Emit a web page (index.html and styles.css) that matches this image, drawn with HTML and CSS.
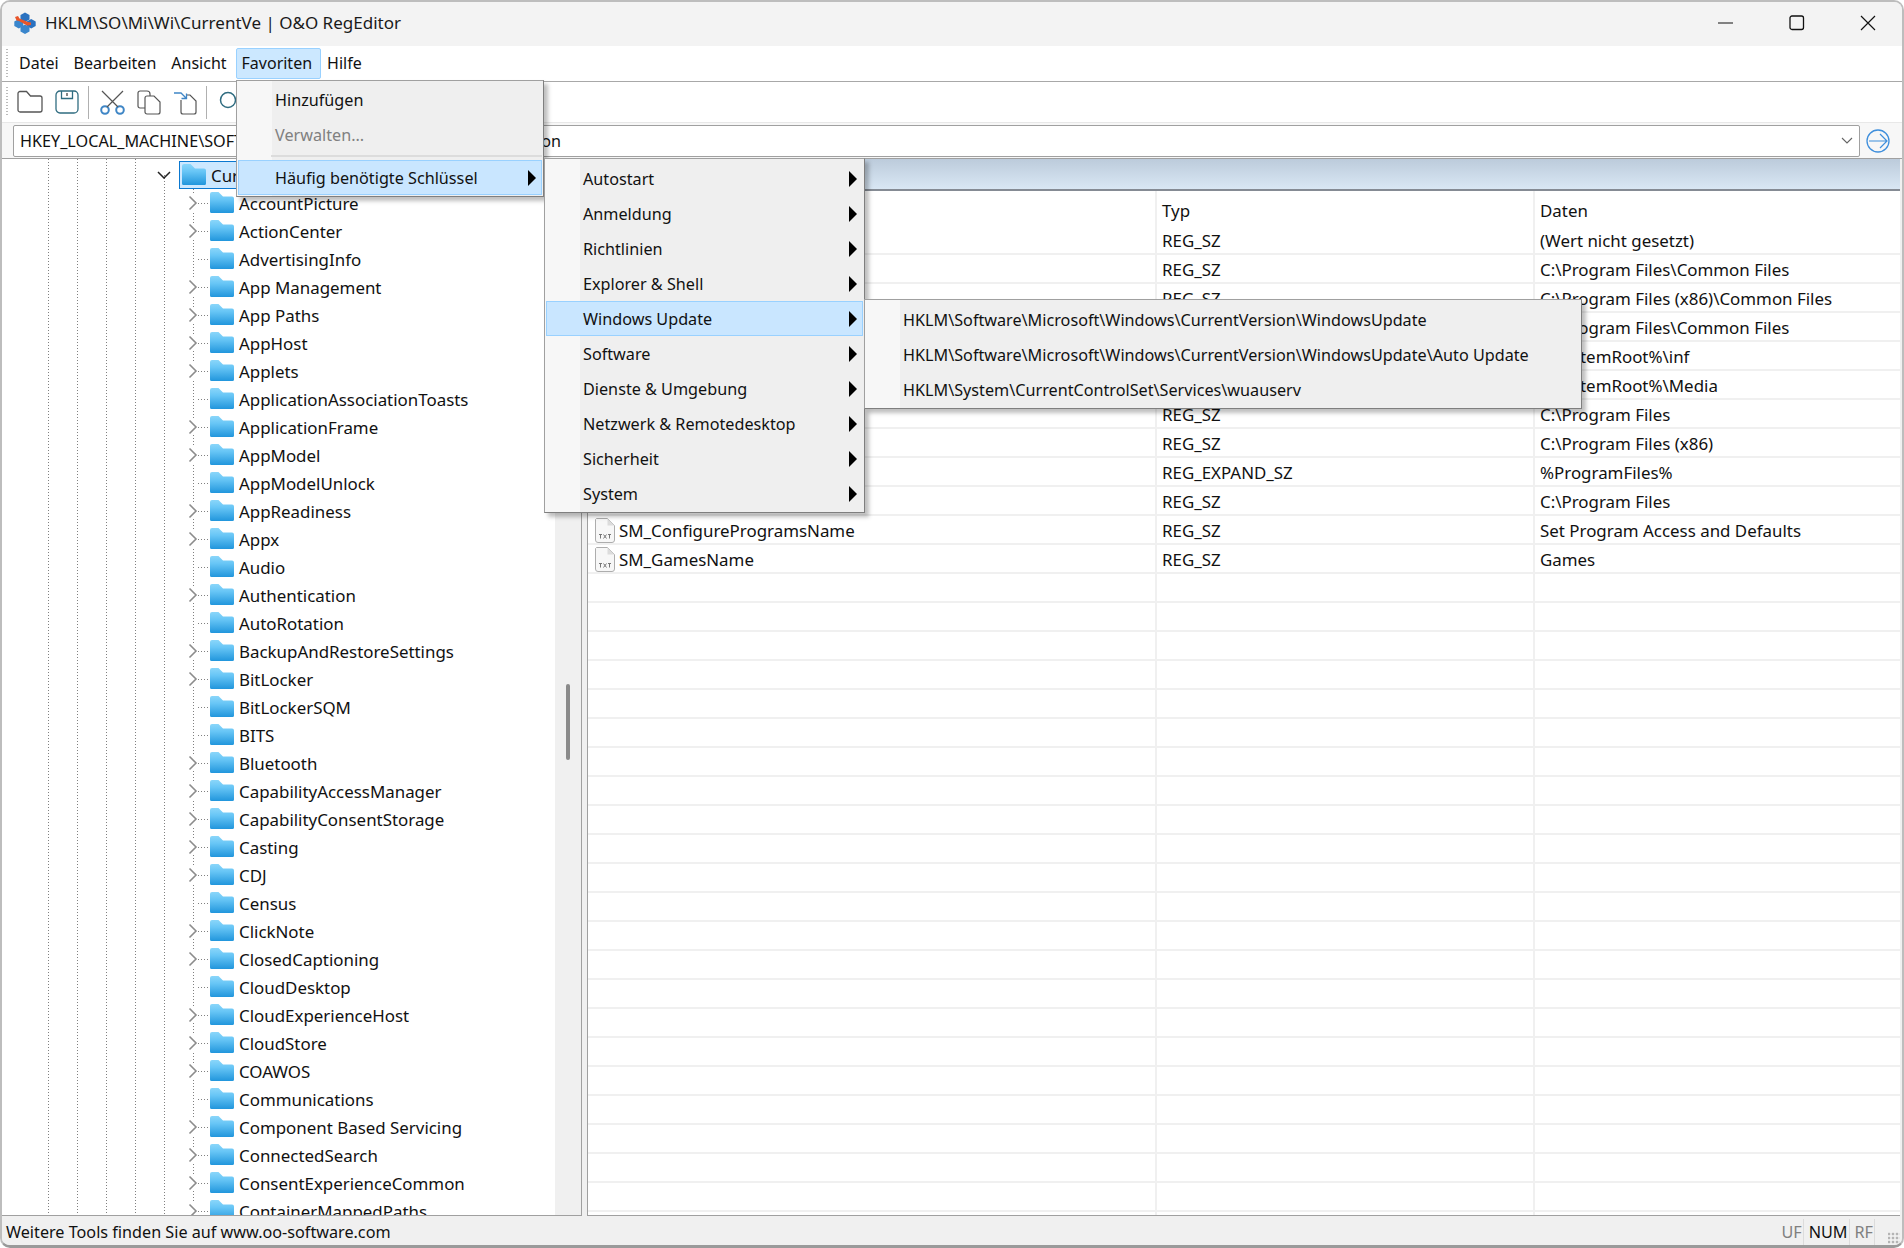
FILE: index.html
```html
<!DOCTYPE html>
<html lang="de">
<head>
    <meta charset="UTF-8">
    <title>O&amp;O RegEditor</title>
    <link rel="stylesheet" href="styles.css">
</head>
<body>
    <svg class="defs" width="0" height="0">
        <symbol id="folder" viewBox="0 0 24 21">
            <path d="M0 2a2 2 0 0 1 2-2h6.500l4.500 4.500h9a2 2 0 0 1 2 2V19.500a1.500 1.500 0 0 1-1.500 1.500H1.500A1.500 1.500 0 0 1 0 19.500z" fill="url(#folderfill)"/>
        </symbol>
        <linearGradient id="folderfill" x1="0" y1="0" x2="0" y2="1">
            <stop offset="0" stop-color="#8ad6fa"/>
            <stop offset="0.35" stop-color="#68c6f6"/>
            <stop offset="1" stop-color="#2196dc"/>
        </linearGradient>
        <symbol id="chev" viewBox="0 0 10 16">
            <path d="M1.500 1.500 8 8l-6.500 6.500" fill="none" stroke="#8c8c8c" stroke-width="1.600"/>
        </symbol>
        <symbol id="arrow" viewBox="0 0 8 16">
            <path d="M0 0l8 8-8 8z" fill="#000"/>
        </symbol>
        <symbol id="txt" viewBox="0 0 20 25">
            <path d="M1.500.5h11l7 7v14.500a2.500 2.500 0 0 1-2.500 2.500H3a2.500 2.500 0 0 1-2.500-2.500V1.500z" fill="#f7f7f7" stroke="#adadad"/>
            <path d="M12.500.5v7h7z" fill="#dcdcdc"/>
            <path d="M4 16.500h3M5.500 16.500v4M8.500 16.500l3 4M11.500 16.500l-3 4M13 16.500h3M14.500 16.500v4" stroke="#777" fill="none"/>
        </symbol>
    </svg>

    <div class="window">
        <div class="titlebar">
            <svg class="logo" width="22" height="22" viewBox="0 0 22 22">
                <path d="M11 .5l4.500 2.500v4.500L11 10 6.500 7.500V3z" fill="#2b72c0"/>
                <path d="M4.800 7L9.300 9.500V14L4.800 16.500.3 14V9.500z" fill="#3a86cc"/>
                <path d="M17.200 7l4.500 2.500V14l-4.500 2.500L12.700 14V9.500z" fill="#2b72c0"/>
                <path d="M11 12.500l4.500 2.500v4.500L11 22l-4.500-2.500V15z" fill="#3a86cc"/>
                <path d="M1 5l3-1 1.500 2.500L14 10l3 .5v2.500l-4 .5L5 9 2.500 8.500z" fill="#e8562a"/>
            </svg>
            <span class="title">HKLM\SO\Mi\Wi\CurrentVe | O&amp;O RegEditor</span>
            <div class="winbtns">
                <svg width="16" height="16" viewBox="0 0 16 16"><path d="M0 8h15" stroke="#111" stroke-width="1.200"/></svg>
                <svg width="16" height="16" viewBox="0 0 16 16"><rect x="1" y="1" width="13.500" height="13.500" rx="2" fill="none" stroke="#111" stroke-width="1.300"/></svg>
                <svg width="16" height="16" viewBox="0 0 16 16"><path d="M1 1l14 14M15 1L1 15" stroke="#111" stroke-width="1.200"/></svg>
            </div>
        </div>

        <div class="menubar">
            <span class="gripper"></span>
            <span class="mb-item">Datei</span>
            <span class="mb-item">Bearbeiten</span>
            <span class="mb-item">Ansicht</span>
            <span class="mb-item active">Favoriten</span>
            <span class="mb-item">Hilfe</span>
        </div>

        <div class="toolbar">
            <span class="gripper"></span>
            <svg class="tool tool-first" width="26" height="24" viewBox="0 0 26 24"><path d="M1 3.500a2 2 0 0 1 2-2h6.500l4 4.500H23a2 2 0 0 1 2 2v12a2 2 0 0 1-2 2H3a2 2 0 0 1-2-2z" fill="none" stroke="#555" stroke-width="1.300"/></svg>
            <svg class="tool" width="24" height="24" viewBox="0 0 24 24"><rect x="1" y="1" width="22" height="22" rx="4" fill="none" stroke="#2f6c80" stroke-width="1.300"/><path d="M6.500 1v7.500h11V1" fill="none" stroke="#2f6c80" stroke-width="1.300"/><path d="M12 3v3" stroke="#444" stroke-width="1.300"/></svg>
            <span class="tool-sep"></span>
            <svg class="tool" width="25" height="25" viewBox="0 0 25 25"><circle cx="5" cy="20" r="3.800" fill="none" stroke="#3f86c6" stroke-width="2"/><circle cx="20" cy="20" r="3.800" fill="none" stroke="#3f86c6" stroke-width="2"/><path d="M2 1l16 16M23 1L7 17" stroke="#555" stroke-width="1.200"/></svg>
            <svg class="tool" width="24" height="25" viewBox="0 0 24 25"><path d="M8 18H3a2 2 0 0 1-2-2V3a2 2 0 0 1 2-2h7a3 3 0 0 1 3 3v2" fill="none" stroke="#555" stroke-width="1.200"/><path d="M8 8a2 2 0 0 1 2-2h7l6 6v10a2 2 0 0 1-2 2H10a2 2 0 0 1-2-2z" fill="none" stroke="#555" stroke-width="1.200"/></svg>
            <svg class="tool" width="24" height="25" viewBox="0 0 24 25"><path d="M8 10v12a2 2 0 0 0 2 2h11a2 2 0 0 0 2-2V11l-6-6h-3" fill="none" stroke="#555" stroke-width="1.200"/><path d="M1 3h7l5.500 5.500M13.500 3.500v5h-5" fill="none" stroke="#3f86c6" stroke-width="1.300"/></svg>
            <span class="tool-sep"></span>
            <svg class="tool" width="24" height="24" viewBox="0 0 24 24"><circle cx="10" cy="10" r="7.500" fill="none" stroke="#2f6c80" stroke-width="1.500"/></svg>
        </div>

        <div class="addressbar">
            <div class="combo">
                <span class="combo-text">HKEY_LOCAL_MACHINE\SOFTWARE\Microsoft\Windows\CurrentVersion</span>
                <svg width="12" height="8" viewBox="0 0 12 8"><path d="M1 1l5 5 5-5" fill="none" stroke="#666" stroke-width="1.100"/></svg>
            </div>
            <svg class="go" width="24" height="24" viewBox="0 0 24 24"><circle cx="12" cy="12" r="11" fill="none" stroke="#3f8fdc" stroke-width="1.300"/><path d="M3 12h18M14 5l7 7-7 7" fill="none" stroke="#3f8fdc" stroke-width="1.200"/></svg>
        </div>

        <div class="panes">
            <div class="tree-pane">
                <div class="tree">
                    <div class="node node-cur">
                        <svg class="chev-open" width="14" height="8" viewBox="0 0 14 8"><path d="M1 1l6 6 6-6" fill="none" stroke="#222" stroke-width="1.500"/></svg>
                        <span class="cur-box"><svg class="folder" width="24" height="21"><use href="#folder"/></svg><span class="cur-label">CurrentVersion</span></span>
                    </div>
                    <div class="subtree">
                        <div class="node"><span class="tw"><svg width="10" height="16"><use href="#chev"/></svg></span><span class="dots"></span><svg class="folder" width="24" height="21"><use href="#folder"/></svg><span class="label">AccountPicture</span></div>
                        <div class="node"><span class="tw"><svg width="10" height="16"><use href="#chev"/></svg></span><span class="dots"></span><svg class="folder" width="24" height="21"><use href="#folder"/></svg><span class="label">ActionCenter</span></div>
                        <div class="node"><span class="tw none"></span><span class="dots"></span><svg class="folder" width="24" height="21"><use href="#folder"/></svg><span class="label">AdvertisingInfo</span></div>
                        <div class="node"><span class="tw"><svg width="10" height="16"><use href="#chev"/></svg></span><span class="dots"></span><svg class="folder" width="24" height="21"><use href="#folder"/></svg><span class="label">App Management</span></div>
                        <div class="node"><span class="tw"><svg width="10" height="16"><use href="#chev"/></svg></span><span class="dots"></span><svg class="folder" width="24" height="21"><use href="#folder"/></svg><span class="label">App Paths</span></div>
                        <div class="node"><span class="tw"><svg width="10" height="16"><use href="#chev"/></svg></span><span class="dots"></span><svg class="folder" width="24" height="21"><use href="#folder"/></svg><span class="label">AppHost</span></div>
                        <div class="node"><span class="tw"><svg width="10" height="16"><use href="#chev"/></svg></span><span class="dots"></span><svg class="folder" width="24" height="21"><use href="#folder"/></svg><span class="label">Applets</span></div>
                        <div class="node"><span class="tw none"></span><span class="dots"></span><svg class="folder" width="24" height="21"><use href="#folder"/></svg><span class="label">ApplicationAssociationToasts</span></div>
                        <div class="node"><span class="tw"><svg width="10" height="16"><use href="#chev"/></svg></span><span class="dots"></span><svg class="folder" width="24" height="21"><use href="#folder"/></svg><span class="label">ApplicationFrame</span></div>
                        <div class="node"><span class="tw"><svg width="10" height="16"><use href="#chev"/></svg></span><span class="dots"></span><svg class="folder" width="24" height="21"><use href="#folder"/></svg><span class="label">AppModel</span></div>
                        <div class="node"><span class="tw none"></span><span class="dots"></span><svg class="folder" width="24" height="21"><use href="#folder"/></svg><span class="label">AppModelUnlock</span></div>
                        <div class="node"><span class="tw"><svg width="10" height="16"><use href="#chev"/></svg></span><span class="dots"></span><svg class="folder" width="24" height="21"><use href="#folder"/></svg><span class="label">AppReadiness</span></div>
                        <div class="node"><span class="tw"><svg width="10" height="16"><use href="#chev"/></svg></span><span class="dots"></span><svg class="folder" width="24" height="21"><use href="#folder"/></svg><span class="label">Appx</span></div>
                        <div class="node"><span class="tw none"></span><span class="dots"></span><svg class="folder" width="24" height="21"><use href="#folder"/></svg><span class="label">Audio</span></div>
                        <div class="node"><span class="tw"><svg width="10" height="16"><use href="#chev"/></svg></span><span class="dots"></span><svg class="folder" width="24" height="21"><use href="#folder"/></svg><span class="label">Authentication</span></div>
                        <div class="node"><span class="tw none"></span><span class="dots"></span><svg class="folder" width="24" height="21"><use href="#folder"/></svg><span class="label">AutoRotation</span></div>
                        <div class="node"><span class="tw"><svg width="10" height="16"><use href="#chev"/></svg></span><span class="dots"></span><svg class="folder" width="24" height="21"><use href="#folder"/></svg><span class="label">BackupAndRestoreSettings</span></div>
                        <div class="node"><span class="tw"><svg width="10" height="16"><use href="#chev"/></svg></span><span class="dots"></span><svg class="folder" width="24" height="21"><use href="#folder"/></svg><span class="label">BitLocker</span></div>
                        <div class="node"><span class="tw none"></span><span class="dots"></span><svg class="folder" width="24" height="21"><use href="#folder"/></svg><span class="label">BitLockerSQM</span></div>
                        <div class="node"><span class="tw none"></span><span class="dots"></span><svg class="folder" width="24" height="21"><use href="#folder"/></svg><span class="label">BITS</span></div>
                        <div class="node"><span class="tw"><svg width="10" height="16"><use href="#chev"/></svg></span><span class="dots"></span><svg class="folder" width="24" height="21"><use href="#folder"/></svg><span class="label">Bluetooth</span></div>
                        <div class="node"><span class="tw"><svg width="10" height="16"><use href="#chev"/></svg></span><span class="dots"></span><svg class="folder" width="24" height="21"><use href="#folder"/></svg><span class="label">CapabilityAccessManager</span></div>
                        <div class="node"><span class="tw"><svg width="10" height="16"><use href="#chev"/></svg></span><span class="dots"></span><svg class="folder" width="24" height="21"><use href="#folder"/></svg><span class="label">CapabilityConsentStorage</span></div>
                        <div class="node"><span class="tw"><svg width="10" height="16"><use href="#chev"/></svg></span><span class="dots"></span><svg class="folder" width="24" height="21"><use href="#folder"/></svg><span class="label">Casting</span></div>
                        <div class="node"><span class="tw"><svg width="10" height="16"><use href="#chev"/></svg></span><span class="dots"></span><svg class="folder" width="24" height="21"><use href="#folder"/></svg><span class="label">CDJ</span></div>
                        <div class="node"><span class="tw none"></span><span class="dots"></span><svg class="folder" width="24" height="21"><use href="#folder"/></svg><span class="label">Census</span></div>
                        <div class="node"><span class="tw"><svg width="10" height="16"><use href="#chev"/></svg></span><span class="dots"></span><svg class="folder" width="24" height="21"><use href="#folder"/></svg><span class="label">ClickNote</span></div>
                        <div class="node"><span class="tw"><svg width="10" height="16"><use href="#chev"/></svg></span><span class="dots"></span><svg class="folder" width="24" height="21"><use href="#folder"/></svg><span class="label">ClosedCaptioning</span></div>
                        <div class="node"><span class="tw none"></span><span class="dots"></span><svg class="folder" width="24" height="21"><use href="#folder"/></svg><span class="label">CloudDesktop</span></div>
                        <div class="node"><span class="tw"><svg width="10" height="16"><use href="#chev"/></svg></span><span class="dots"></span><svg class="folder" width="24" height="21"><use href="#folder"/></svg><span class="label">CloudExperienceHost</span></div>
                        <div class="node"><span class="tw"><svg width="10" height="16"><use href="#chev"/></svg></span><span class="dots"></span><svg class="folder" width="24" height="21"><use href="#folder"/></svg><span class="label">CloudStore</span></div>
                        <div class="node"><span class="tw"><svg width="10" height="16"><use href="#chev"/></svg></span><span class="dots"></span><svg class="folder" width="24" height="21"><use href="#folder"/></svg><span class="label">COAWOS</span></div>
                        <div class="node"><span class="tw none"></span><span class="dots"></span><svg class="folder" width="24" height="21"><use href="#folder"/></svg><span class="label">Communications</span></div>
                        <div class="node"><span class="tw"><svg width="10" height="16"><use href="#chev"/></svg></span><span class="dots"></span><svg class="folder" width="24" height="21"><use href="#folder"/></svg><span class="label">Component Based Servicing</span></div>
                        <div class="node"><span class="tw"><svg width="10" height="16"><use href="#chev"/></svg></span><span class="dots"></span><svg class="folder" width="24" height="21"><use href="#folder"/></svg><span class="label">ConnectedSearch</span></div>
                        <div class="node"><span class="tw"><svg width="10" height="16"><use href="#chev"/></svg></span><span class="dots"></span><svg class="folder" width="24" height="21"><use href="#folder"/></svg><span class="label">ConsentExperienceCommon</span></div>
                        <div class="node"><span class="tw"><svg width="10" height="16"><use href="#chev"/></svg></span><span class="dots"></span><svg class="folder" width="24" height="21"><use href="#folder"/></svg><span class="label">ContainerMappedPaths</span></div>
                    </div>
                </div>
                <div class="scrollbar"><span class="thumb"></span></div>
            </div>

            <div class="list-pane">
                <div class="list-band"></div>
                <div class="list-head">
                    <span class="col-name"></span>
                    <span class="col-type">Typ</span>
                    <span class="col-data">Daten</span>
                </div>
                <div class="list-body">
                    <div class="row"><span class="col-name"></span><span class="col-type">REG_SZ</span><span class="col-data">(Wert nicht gesetzt)</span></div>
                    <div class="row"><span class="col-name"></span><span class="col-type">REG_SZ</span><span class="col-data">C:\Program Files\Common Files</span></div>
                    <div class="row"><span class="col-name"></span><span class="col-type">REG_SZ</span><span class="col-data">C:\Program Files (x86)\Common Files</span></div>
                    <div class="row"><span class="col-name"></span><span class="col-type">REG_SZ</span><span class="col-data">C:\Program Files\Common Files</span></div>
                    <div class="row"><span class="col-name"></span><span class="col-type">REG_EXPAND_SZ</span><span class="col-data">%SystemRoot%\inf</span></div>
                    <div class="row"><span class="col-name"></span><span class="col-type">REG_EXPAND_SZ</span><span class="col-data">%SystemRoot%\Media</span></div>
                    <div class="row"><span class="col-name"></span><span class="col-type">REG_SZ</span><span class="col-data">C:\Program Files</span></div>
                    <div class="row"><span class="col-name"></span><span class="col-type">REG_SZ</span><span class="col-data">C:\Program Files (x86)</span></div>
                    <div class="row"><span class="col-name"></span><span class="col-type">REG_EXPAND_SZ</span><span class="col-data">%ProgramFiles%</span></div>
                    <div class="row"><span class="col-name"></span><span class="col-type">REG_SZ</span><span class="col-data">C:\Program Files</span></div>
                    <div class="row"><span class="col-name"><svg width="20" height="25"><use href="#txt"/></svg>SM_ConfigureProgramsName</span><span class="col-type">REG_SZ</span><span class="col-data">Set Program Access and Defaults</span></div>
                    <div class="row"><span class="col-name"><svg width="20" height="25"><use href="#txt"/></svg>SM_GamesName</span><span class="col-type">REG_SZ</span><span class="col-data">Games</span></div>
                </div>
            </div>
        </div>

        <div class="statusbar">
            <span class="status-text">Weitere Tools finden Sie auf www.oo-software.com</span>
            <span class="ind off">UF</span>
            <span class="ind">NUM</span>
            <span class="ind off">RF</span>
            <span class="grip"></span>
        </div>

        <!-- offene Menues -->
        <div class="menu menu-fav">
            <div class="mi">Hinzufügen</div>
            <div class="mi disabled">Verwalten...</div>
            <div class="menu-sep"></div>
            <div class="mi hover">Häufig benötigte Schlüssel<svg width="8" height="16"><use href="#arrow"/></svg></div>
        </div>
        <div class="menu menu-keys">
            <div class="mi">Autostart<svg width="8" height="16"><use href="#arrow"/></svg></div>
            <div class="mi">Anmeldung<svg width="8" height="16"><use href="#arrow"/></svg></div>
            <div class="mi">Richtlinien<svg width="8" height="16"><use href="#arrow"/></svg></div>
            <div class="mi">Explorer &amp; Shell<svg width="8" height="16"><use href="#arrow"/></svg></div>
            <div class="mi hover">Windows Update<svg width="8" height="16"><use href="#arrow"/></svg></div>
            <div class="mi">Software<svg width="8" height="16"><use href="#arrow"/></svg></div>
            <div class="mi">Dienste &amp; Umgebung<svg width="8" height="16"><use href="#arrow"/></svg></div>
            <div class="mi">Netzwerk &amp; Remotedesktop<svg width="8" height="16"><use href="#arrow"/></svg></div>
            <div class="mi">Sicherheit<svg width="8" height="16"><use href="#arrow"/></svg></div>
            <div class="mi">System<svg width="8" height="16"><use href="#arrow"/></svg></div>
        </div>
        <div class="menu menu-update">
            <div class="mi">HKLM\Software\Microsoft\Windows\CurrentVersion\WindowsUpdate</div>
            <div class="mi">HKLM\Software\Microsoft\Windows\CurrentVersion\WindowsUpdate\Auto Update</div>
            <div class="mi">HKLM\System\CurrentControlSet\Services\wuauserv</div>
        </div>
    </div>
</body>
</html>
```

FILE: styles.css
```css
* {
    box-sizing: border-box;
}
body {
    margin: 0;
    background: #fff;
    font-family: "Noto Sans", sans-serif;
    font-size: 16px;
    color: #111;
}
.defs {
    position: absolute;
}
.window {
    position: relative;
    width: 1904px;
    height: 1248px;
    display: flex;
    flex-direction: column;
    overflow: hidden;
    background: #f0f0f0;
    border: 2px solid #bdbdbd;
    border-bottom: 3px solid #9a9a9a;
    border-radius: 10px;
}

/* title */
.titlebar {
    height: 44px;
    flex: none;
    display: flex;
    align-items: center;
    padding: 0 0 3px 12px;
    background: #f3f3f3;
}
.logo {
    margin-right: 9px;
}
.title {
    flex: 1;
    font-size: 17px;
    color: #1a1a1a;
}
.winbtns {
    display: flex;
    gap: 55px;
    padding-right: 26px;
}

/* menu + toolbar */
.menubar {
    height: 36px;
    flex: none;
    display: flex;
    align-items: center;
    padding: 0 0 0 4px;
    background: #fff;
    border-bottom: 1px solid #a8a8a8;
}
.gripper {
    width: 2px;
    height: 30px;
    margin-right: 5px;
    background: repeating-linear-gradient(to bottom, #bbb 0 1px, transparent 1px 3px);
}
.mb-item {
    padding: 0 8px 0 5px;
    height: 31px;
    line-height: 29px;
    border: 1px solid transparent;
    border-radius: 2px;
}
.mb-item.active {
    background: #cce8ff;
    border-color: #99d1ff;
}
.toolbar {
    height: 41px;
    flex: none;
    display: flex;
    align-items: center;
    padding: 0 0 0 4px;
    background: #fff;
    border-bottom: 1px solid #e8e8e8;
}
.tool {
    margin-left: 12px;
}
.tool-first {
    margin-left: 4px;
}
.tool-sep {
    width: 1px;
    height: 33px;
    margin-left: 9px;
    background: #b0b0b0;
}
.tool-sep + .tool {
    margin-left: 11px;
}
.addressbar {
    height: 36px;
    flex: none;
    display: flex;
    align-items: center;
    padding: 0 0 0 11px;
    background: #f7f7f7;
    border-bottom: 1px solid #a0a0a0;
}
.combo {
    width: 1847px;
    height: 32px;
    display: flex;
    align-items: center;
    justify-content: space-between;
    padding: 0 6px;
    font-size: 16.200px;
    background: #fff;
    border: 1px solid #a0a0a0;
    border-radius: 2px;
}
.go {
    margin-left: 6px;
}

/* panes */
.panes {
    flex: 1;
    min-height: 0;
    display: flex;
    font-size: 16.900px;
}
.tree-pane {
    width: 580px;
    display: flex;
    background: #fff;
    border-right: 1px solid #a0a0a0;
    border-bottom: 1px solid #a0a0a0;
    overflow: hidden;
}
.tree {
    flex: 1;
    min-width: 0;
    padding-top: 2px;
    background:
        repeating-linear-gradient(to bottom, #808080 0 1px, transparent 1px 3px) 46px 0 / 1px 100% no-repeat,
        repeating-linear-gradient(to bottom, #808080 0 1px, transparent 1px 3px) 75px 0 / 1px 100% no-repeat,
        repeating-linear-gradient(to bottom, #808080 0 1px, transparent 1px 3px) 104px 0 / 1px 100% no-repeat,
        repeating-linear-gradient(to bottom, #808080 0 1px, transparent 1px 3px) 133px 0 / 1px 100% no-repeat,
        repeating-linear-gradient(to bottom, #808080 0 1px, transparent 1px 3px) 162px 16px / 1px 100% no-repeat;
    overflow: hidden;
}
.node {
    height: 28px;
    display: flex;
    align-items: center;
    padding-left: 186px;
    white-space: nowrap;
}
.node-cur {
    padding-left: 155px;
}
.chev-open {
    flex: none;
}
.cur-box {
    display: flex;
    align-items: center;
    width: 130px;
    height: 28px;
    margin-left: 8px;
    padding-left: 2px;
    background: #cce8ff;
    border: 1px solid #0a78d0;
}
.cur-label {
    margin-left: 5px;
}
.subtree {
    background: repeating-linear-gradient(to bottom, #808080 0 1px, transparent 1px 3px) 191px 0 / 1px 100% no-repeat;
}
.tw {
    width: 10px;
    height: 16px;
    flex: none;
    background: #fff;
}
.tw.none {
    background: transparent;
}
.tw svg {
    display: block;
}
.dots {
    width: 12px;
    height: 1px;
    flex: none;
    background: repeating-linear-gradient(to right, #808080 0 1px, transparent 1px 3px);
}
.folder {
    flex: none;
    margin-top: -2px;
}
.label {
    margin-left: 5px;
}
.scrollbar {
    width: 26px;
    flex: none;
    display: flex;
    justify-content: center;
    background: #f0f0f0;
}
.thumb {
    width: 4px;
    height: 76px;
    margin-top: 525px;
    border-radius: 2px;
    background: #8a8a8a;
}
.list-pane {
    flex: 1;
    min-width: 0;
    margin-left: 5px;
    margin-right: 2px;
    display: flex;
    flex-direction: column;
    background: #fff;
    border-left: 1px solid #a0a0a0;
    border-bottom: 1px solid #a0a0a0;
    overflow: hidden;
}
.list-band {
    height: 32px;
    flex: none;
    background: linear-gradient(to bottom, #bccbdb, #d9e7f4);
    border-bottom: 2px solid #858b94;
}
.list-head, .row {
    display: flex;
    align-items: center;
    white-space: nowrap;
}
.list-head {
    height: 35px;
    flex: none;
    padding-top: 3px;
    background:
        linear-gradient(#f0f0f0, #f0f0f0) 567px 0 / 2px 100% no-repeat,
        linear-gradient(#f0f0f0, #f0f0f0) 945px 0 / 2px 100% no-repeat;
}
.row {
    height: 29px;
}
.col-name {
    width: 568px;
    flex: none;
    display: flex;
    align-items: center;
    gap: 4px;
    padding-left: 7px;
}
.col-type {
    width: 378px;
    flex: none;
    padding-left: 6px;
}
.col-data {
    padding-left: 6px;
}
.list-body {
    flex: 1;
    min-height: 0;
    background:
        linear-gradient(#f0f0f0, #f0f0f0) 567px 0 / 2px 100% no-repeat,
        linear-gradient(#f0f0f0, #f0f0f0) 945px 0 / 2px 100% no-repeat,
        repeating-linear-gradient(to bottom, transparent 0 27px, #f0f0f0 27px 29px);
}

/* status */
.statusbar {
    height: 29px;
    flex: none;
    display: flex;
    align-items: center;
    padding: 2px 0 0 4px;
    background: #f0f0f0;
    font-size: 16.200px;
}
.status-text {
    flex: 1;
}
.ind {
    padding: 0 1px 0 5px;
    line-height: 26px;
    border-right: 1px solid #dcdcdc;
}
.ind.off {
    color: #808080;
}
.grip {
    width: 27px;
    height: 12px;
    margin-top: 12px;
    background: radial-gradient(circle, #b4b4b4 1.500px, transparent 1.600px) 0 0 / 4px 4px;
    background-clip: content-box;
    padding-left: 13px;
    padding-right: 2px;
}

/* open menus */
.menu {
    position: absolute;
    padding: 2px 1px 1px;
    font-size: 16.200px;
    border: 1px solid #a0a0a0;
    border-right-color: #7f7f7f;
    border-bottom-color: #7f7f7f;
    box-shadow: 4px 4px 4px rgba(0, 0, 0, 0.25);
    background: linear-gradient(to right, #f7f7f7 35px, #efefef 35px);
}
.menu-fav {
    left: 234px;
    top: 78px;
    width: 308px;
    padding-top: 1px;
}
.menu-keys {
    left: 542px;
    top: 156px;
    width: 321px;
}
.menu-update {
    left: 862px;
    top: 297px;
    width: 718px;
}
.mi {
    height: 35px;
    display: flex;
    align-items: center;
    justify-content: space-between;
    padding: 0 6px 0 37px;
    white-space: nowrap;
}
.mi.disabled {
    color: #808080;
}
.mi.hover {
    background: #c9e6ff;
    outline: 1px solid #99d1ff;
    outline-offset: -1px;
}
.menu-sep {
    height: 2px;
    margin: 3px 0 3px 33px;
    background: #dcdcdc;
}
```
